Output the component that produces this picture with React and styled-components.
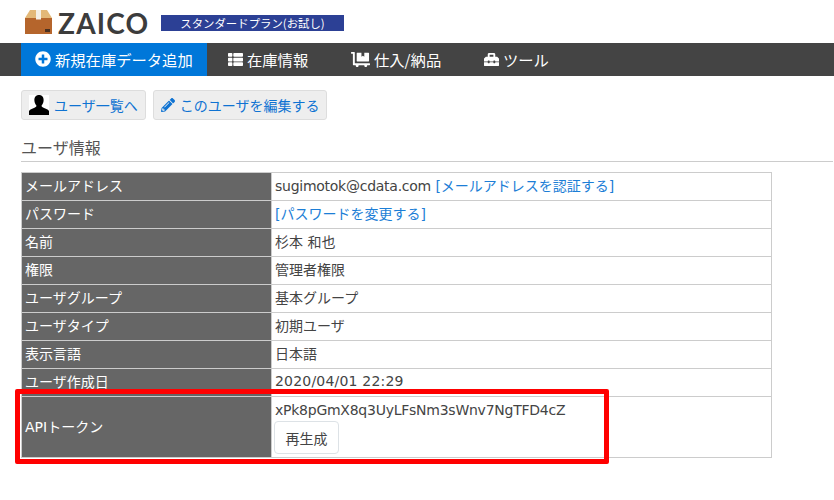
import styled, { createGlobalStyle } from "styled-components";
import { FaPlusCircle, FaThList, FaDollyFlatbed, FaToolbox, FaPencilAlt } from "react-icons/fa";

const rows = [
  { label: "名前", value: "杉本 和也" },
  { label: "権限", value: "管理者権限" },
  { label: "ユーザグループ", value: "基本グループ" },
  { label: "ユーザタイプ", value: "初期ユーザ" },
  { label: "表示言語", value: "日本語" },
  { label: "ユーザ作成日", value: "2020/04/01 22:29", spacing: 0.2 },
];

export default function App() {
  return (
    <Page>
      <GlobalStyle />
      <Header>
        <BoxLogo />
        <LogoText>ZAICO</LogoText>
        <PlanBadge>スタンダードプラン(お試し)</PlanBadge>
      </Header>
      <Nav>
        <NavItem $active $width={186}>
          <FaPlusCircle size={16} />
          新規在庫データ追加
        </NavItem>
        <NavItem $width={123}>
          <FaThList size={15} />
          在庫情報
        </NavItem>
        <NavItem $width={133}>
          <FaDollyFlatbed size={19} />
          仕入/納品
        </NavItem>
        <NavItem>
          <FaToolbox size={15} />
          ツール
        </NavItem>
      </Nav>
      <Content>
        <ButtonRow>
          <LinkButton>
            <UserIcon />
            ユーザ一覧へ
          </LinkButton>
          <LinkButton>
            <FaPencilAlt size={14} />
            このユーザを編集する
          </LinkButton>
        </ButtonRow>
        <Heading>ユーザ情報</Heading>
        <TableWrap>
          <InfoTable>
            <tbody>
              <tr>
                <Th>メールアドレス</Th>
                <Td>
                  <Latin $spacing={-0.26}>sugimotok@cdata.com</Latin> <TextLink>[メールアドレスを認証する]</TextLink>
                </Td>
              </tr>
              <tr>
                <Th>パスワード</Th>
                <Td>
                  <TextLink>[パスワードを変更する]</TextLink>
                </Td>
              </tr>
              {rows.map((row) => (
                <tr key={row.label}>
                  <Th>{row.label}</Th>
                  <Td>
                    <Latin $spacing={row.spacing || 0}>{row.value}</Latin>
                  </Td>
                </tr>
              ))}
              <tr>
                <Th>APIトークン</Th>
                <Td>
                  <Token>xPk8pGmX8q3UyLFsNm3sWnv7NgTFD4cZ</Token>
                  <RegenButton>再生成</RegenButton>
                </Td>
              </tr>
            </tbody>
          </InfoTable>
          <Highlight />
        </TableWrap>
      </Content>
    </Page>
  );
}

function BoxLogo() {
  return (
    <LogoSvg viewBox="0 0 27 24">
      <path d="M5 0h17l5 8H0z" fill="#e3b878" />
      <path d="M0 8h27v16H0z" fill="#b5652c" />
      <path d="M11 0h5v9.5h-5z" fill="#f4efe6" />
      <path d="M20 19h5v3h-5z" fill="#4a3020" />
    </LogoSvg>
  );
}

function UserIcon() {
  return (
    <UserSvg viewBox="0 0 20 20">
      <path d="M0 0h20v20H0z" fill="#fff" />
      <path
        d="M10 0c3 0 4.8 2.2 4.6 5.4-.1 2-.9 3.800-2 5 0 1 .4 1.500 1.400 2 2 .9 5 1.600 6 3.600V20H0v-4c1-2 4-2.700 6-3.600 1-.5 1.400-1 1.400-2-1.100-1.200-1.900-3-2-5C5.200 2.200 7 0 10 0z"
        fill="#000"
      />
    </UserSvg>
  );
}

const GlobalStyle = createGlobalStyle`
  body {
    margin: 0;
    background: #fff;
    color: #444;
    font-family: "DejaVu Sans", "Noto Sans CJK JP", sans-serif;
    font-size: 14px;
  }
`;

const Page = styled.div`
  width: 834px;
  height: 500px;
  overflow: hidden;
`;

const Header = styled.header`
  height: 43px;
  display: flex;
  align-items: center;
  padding: 0 0 0 25px;
  box-sizing: border-box;
`;

const LogoSvg = styled.svg`
  width: 27px;
  height: 24px;
  margin-top: 1px;
`;

const LogoText = styled.span`
  font-family: "Lato", sans-serif;
  font-size: 28px;
  font-weight: 700;
  letter-spacing: 1.2px;
  color: #3c3c3c;
  width: 103px;
  margin-left: 6px;
  margin-top: 2px;
`;

const PlanBadge = styled.div`
  width: 183px;
  height: 16px;
  line-height: 16px;
  margin-top: 3px;
  background: #2c4095;
  color: #fff;
  font-family: "Noto Sans CJK JP", sans-serif;
  font-size: 11.4px;
  text-align: center;
`;

const Nav = styled.nav`
  height: 33px;
  padding-left: 21px;
  background: #444;
  display: flex;
`;

const NavItem = styled.a`
  display: flex;
  align-items: center;
  gap: 4px;
  box-sizing: border-box;
  width: ${(p) => (p.$width ? `${p.$width}px` : "auto")};
  padding-left: ${(p) => (p.$active ? "14px" : "21px")};
  padding-bottom: 2px;
  background: ${(p) => (p.$active ? "#0077d9" : "transparent")};
  color: #fff;
  font-family: "Noto Sans CJK JP", sans-serif;
  font-size: 15.3px;
  white-space: nowrap;

  svg {
    margin-top: 1px;
  }
`;

const Content = styled.main`
  padding: 14px 0 0 21px;
`;

const ButtonRow = styled.div`
  display: flex;
  gap: 7px;
`;

const LinkButton = styled.a`
  display: flex;
  align-items: center;
  gap: 5px;
  height: 30px;
  box-sizing: border-box;
  padding: 0 7px;
  background: #eee;
  border: 1px solid #ddd;
  border-radius: 3px;
  color: #0f73d2;
  font-size: 14px;
`;

const UserSvg = styled.svg`
  width: 20px;
  height: 20px;
`;

const Heading = styled.h2`
  margin: 18px 1px 10px 0;
  height: 23px;
  line-height: 22px;
  border-bottom: 1px solid #ccc;
  font-size: 16px;
  font-weight: 400;
  color: #555;
`;

const TableWrap = styled.div`
  position: relative;
  width: 751px;
`;

const InfoTable = styled.table`
  width: 751px;
  table-layout: fixed;
  border-collapse: collapse;
  border: 1px solid #ccc;
`;

const Th = styled.th`
  width: 250px;
  height: 28px;
  padding: 0 3px 3px;
  box-sizing: border-box;
  border: 1px solid #ccc;
  background: #666;
  color: #fff;
  font-size: 14px;
  font-weight: 400;
  text-align: left;
`;

const Td = styled.td`
  padding: 0 3px 3px;
  border: 1px solid #ccc;
  font-size: 14px;
  color: #444;
`;

const Latin = styled.span`
  letter-spacing: ${(p) => p.$spacing}px;
`;

const TextLink = styled.a`
  color: #1c7ed6;
`;

const Token = styled.div`
  line-height: 20px;
  margin-top: 3px;
  letter-spacing: -0.25px;
`;

const RegenButton = styled.button`
  display: block;
  width: 65px;
  height: 33px;
  margin: 1px 0 0 -1px;
  background: #fff;
  border: 1px solid #dde2e6;
  border-radius: 4px;
  color: #444;
  font-family: inherit;
  font-size: 14px;
`;

const Highlight = styled.div`
  position: absolute;
  left: -6px;
  bottom: -6px;
  width: 594px;
  height: 75px;
  box-sizing: border-box;
  border: 5px solid #f00;
  border-radius: 2px;
  pointer-events: none;
`;
